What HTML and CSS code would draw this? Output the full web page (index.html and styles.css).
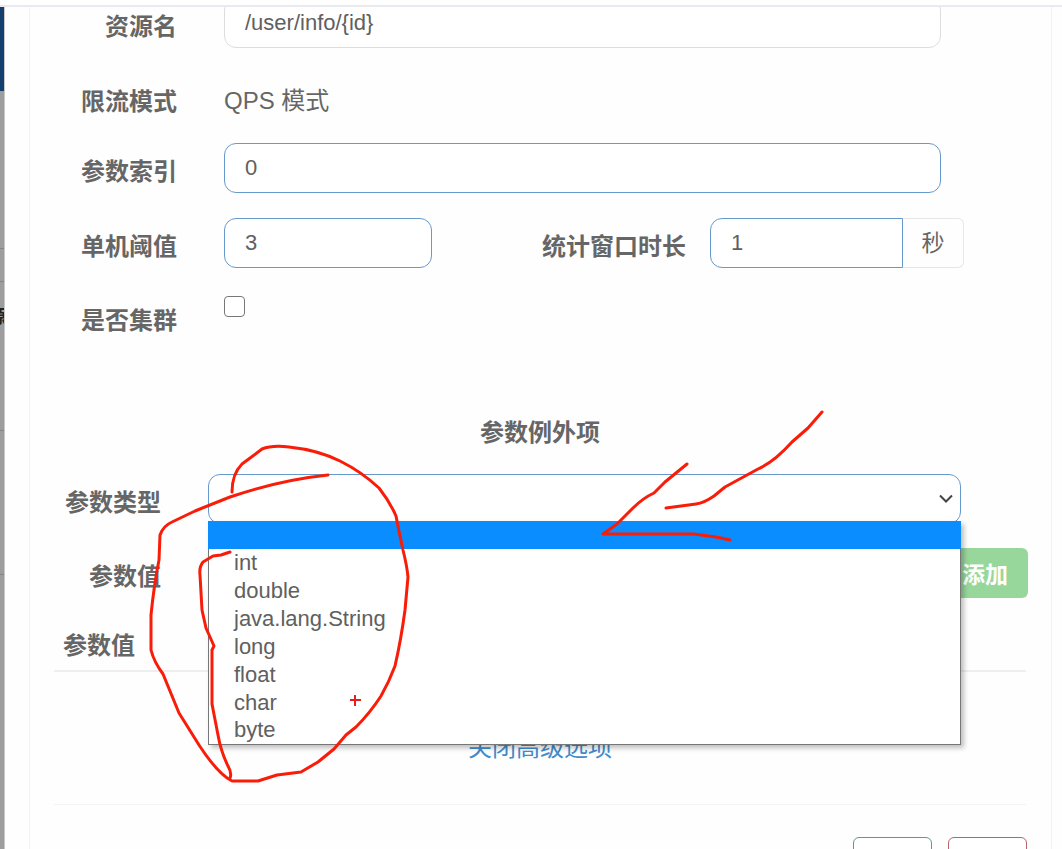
FILE: index.html
```html
<!DOCTYPE html>
<html lang="zh-CN">
<head>
<meta charset="utf-8">
<title>热点参数限流</title>
<link rel="stylesheet" href="styles.css">
</head>
<body>
<header class="topbar"></header>
<div class="stage">
  <aside class="backdrop">
    <div class="bd-nav"></div>
    <div class="bd-block bd-head"></div>
    <div class="bd-block bd-tools"></div>
    <div class="bd-block bd-title">源</div>
    <div class="bd-block bd-list"></div>
    <div class="bd-rest"></div>
  </aside>
  <main class="dialog">
    <form class="panel">
      <div class="row">
        <label class="label" for="resource">资源名</label>
        <input class="field muted" id="resource" type="text" value="/user/info/{id}">
      </div>
      <div class="row row-mode">
        <span class="label">限流模式</span>
        <span class="static">QPS 模式</span>
      </div>
      <div class="row">
        <label class="label" for="index">参数索引</label>
        <input class="field" id="index" type="text" value="0">
      </div>
      <div class="row row-pair">
        <label class="label" for="count">单机阈值</label>
        <input class="field" id="count" type="text" value="3">
        <label class="label" for="window">统计窗口时长</label>
        <div class="group">
          <input class="field" id="window" type="text" value="1">
          <span class="addon">秒</span>
        </div>
      </div>
      <div class="row">
        <label class="label" for="cluster">是否集群</label>
        <input class="check" id="cluster" type="checkbox">
      </div>

      <h2 class="heading">参数例外项</h2>
      <div class="row row-type">
        <label class="label" for="type">参数类型</label>
        <div class="dropdown">
          <select class="field select" id="type"><option></option></select>
          <svg class="chevron" viewBox="0 0 14 9" aria-hidden="true"><path d="M1 1.5 L7 7.5 L13 1.5"/></svg>
          <ul class="menu">
            <li class="active"></li>
            <li>int</li>
            <li>double</li>
            <li>java.lang.String</li>
            <li>long</li>
            <li>float</li>
            <li>char</li>
            <li>byte</li>
          </ul>
        </div>
      </div>
      <div class="row row-value">
        <span class="label">参数值</span>
        <button class="add" type="button">添加</button>
      </div>
      <table class="items">
        <thead><tr><th>参数值</th></tr></thead>
      </table>
      <p class="more"><a href="#">关闭高级选项</a></p>
      <div class="actions">
        <button class="btn ok" type="button" aria-label="保存"></button>
        <button class="btn cancel" type="button" aria-label="取消"></button>
      </div>
    </form>
  </main>
</div>
<svg class="ink" width="1062" height="849" viewBox="0 0 1062 849" aria-hidden="true">
  <path d="M232 492 C232 480 236 470 242 464 L262 449 Q272 445 289 447 Q318 450 340 461 Q362 472 379 488 Q390 502 396 516 Q399 532 403 550 Q407 566 408 577 L405 610 Q401 640 395 666 Q389 682 381 696 Q370 713 356 727 L346 735 L334 749 L318 762 L301 772 L277 775 L258 781 L232 781 Q218 774 199 745 L179 713 L163 674 Q154 662 151 650 L151 615 Q154 585 159 560 L160 535 Q163 526 172 522 L195 511 L230 497 Q280 480 328 475"/>
  <path d="M230 552 L221 555 L213 556 L203 562 Q199 567 200 575 L202 610 L206 628 L214 646 L212 650 L212 704 L218 735 Q221 752 228 766 Q232 773 230 778"/>
  <path d="M822 412 L808 428 L792 442 Q774 462 758 469 L725 487 L714 496 Q704 503 696 504 L666 508"/>
  <path d="M687 464 L665 482 L654 493 Q643 498 633 508 L617 524 L603 534 L694 534 L716 537 L730 540"/>
  <path class="cross" d="M350 700 H361 M355 695 V706"/>
</svg>
</body>
</html>
```

FILE: styles.css
```css
* { box-sizing: border-box; }
body {
  margin: 0;
  height: 100vh;
  overflow: hidden;
  display: flex;
  flex-direction: column;
  background: #fefefe;
  color: #666;
  font-family: "Liberation Sans", "Noto Sans CJK SC", sans-serif;
  font-size: 24px;
}
.topbar { flex: none; height: 7px; background: #fff; border-bottom: 2px solid #e8eaf0; }
.stage { flex: 1; min-height: 0; display: flex; }

.backdrop {
  flex: none;
  width: 5px;
  overflow: hidden;
  display: flex;
  flex-direction: column;
  border-right: 1px solid #c8c8c8;
  background: #9d9d9d;
}
.bd-nav { height: 84px; background: #143e6d; }
.bd-block { border-bottom: 1px solid #858585; }
.bd-head { height: 158px; }
.bd-tools { height: 33px; }
.bd-title {
  height: 149px;
  padding-top: 20px;
  color: #222;
  font-size: 18px;
  font-weight: 700;
  text-indent: -12px;
}
.bd-list { height: 144px; }
.bd-rest { flex: 1; }

.dialog { flex: 1; min-width: 0; overflow: hidden; padding: 0 10px 0 24px; }
.panel {
  height: 100%;
  padding: 0 25px 0 24px;
  border: solid #f2f2f4;
  border-width: 0 1px;
  display: flex;
  flex-direction: column;
}
.panel > * { flex: none; }

.row {
  display: grid;
  grid-template-columns: 123px 1fr;
  column-gap: 47px;
  align-items: start;
  height: 50px;
  margin-bottom: 25px;
  padding-right: 85px;
}
.row:first-child { margin-top: -9px; }
.row-mode { margin-bottom: 20px; }
.label {
  padding-top: 11px;
  line-height: 36px;
  font-weight: 700;
  text-align: right;
  white-space: nowrap;
}
.static { padding-top: 10px; line-height: 36px; }
.field {
  width: 100%;
  min-width: 0;
  height: 50px;
  padding: 0 20px;
  border: 1px solid #6699cc;
  border-radius: 12px;
  background: #fff;
  color: #606060;
  font: inherit;
  font-size: 22px;
}
.field.muted { border-color: #ddd; }
.row-pair {
  grid-template-columns: 170px 208px 1fr 254px;
  column-gap: 0;
  margin-bottom: 24px;
  padding-right: 62px;
}
.row-pair .label { padding-right: 24px; }
.row-pair .label:first-child { padding-right: 47px; }
.group { display: flex; height: 50px; }
.group .field { flex: 1; border-radius: 12px 0 0 12px; }
.addon {
  width: 61px;
  border: 1px solid #e6e6e6;
  border-left: 0;
  border-radius: 0 6px 6px 0;
  font-size: 23px;
  line-height: 48px;
  text-align: center;
}
.check {
  appearance: none;
  width: 21px;
  height: 21px;
  margin: 4px 0 0;
  border: 1px solid #777;
  border-radius: 4px;
  background: #fff;
}

.heading {
  margin: 48px 0 23px;
  font-size: 24px;
  line-height: 36px;
  text-align: center;
}
.row-type, .row-value { grid-template-columns: 107px 1fr; }
.row-type { padding-right: 65px; margin-bottom: 24px; }
.row-value { padding-right: 0; margin-right: -2px; margin-bottom: 24px; }
.dropdown { position: relative; }
.select { appearance: none; display: block; }
.chevron {
  position: absolute;
  right: 8px;
  top: 20px;
  width: 14px;
  height: 9px;
  fill: none;
  stroke: #444;
  stroke-width: 2;
}
.menu {
  position: absolute;
  z-index: 2;
  top: 47px;
  left: 0;
  right: 0;
  margin: 0;
  padding: 0;
  list-style: none;
  border: 1px solid #777;
  border-top: 0;
  background: #fff;
  box-shadow: 3px 3px 5px rgba(0, 0, 0, .25);
  color: #606060;
  font-size: 22px;
}
.menu li { height: 28px; padding-left: 25px; line-height: 28px; }
.menu .active { margin: 0 -1px; background: #0a8dff; }
.menu li:last-child { height: 27px; line-height: 26px; }
.add {
  justify-self: end;
  width: 86px;
  height: 50px;
  padding: 0;
  border: 0;
  border-radius: 6px;
  background: #98d79b;
  color: #fff;
  font: inherit;
  font-size: 23px;
  font-weight: 700;
}
.items { width: 100%; border-collapse: collapse; border-bottom: 2px solid #eee; }
.items th { padding: 6px 9px 6px; line-height: 36px; text-align: left; }
.more {
  margin: 0;
  padding: 58px 0 38px;
  border-bottom: 1px solid #f4f4f4;
  line-height: 36px;
  text-align: center;
}
.more a { color: #428bca; text-decoration: none; }
.actions { display: flex; justify-content: flex-end; gap: 16px; margin: 32px -1px 0 0; }
.btn { width: 79px; height: 50px; border: 1px solid; border-radius: 6px; background: #fff; }
.ok { border-color: #5f9d7c; }
.cancel { border-color: #b9636d; }

.ink {
  position: absolute;
  z-index: 3;
  top: 0;
  left: 0;
  fill: none;
  stroke: #f91c08;
  stroke-width: 3;
  stroke-linecap: round;
  stroke-linejoin: round;
  pointer-events: none;
}
.ink .cross { stroke-width: 2; stroke: #e32020; stroke-linecap: butt; }
```
